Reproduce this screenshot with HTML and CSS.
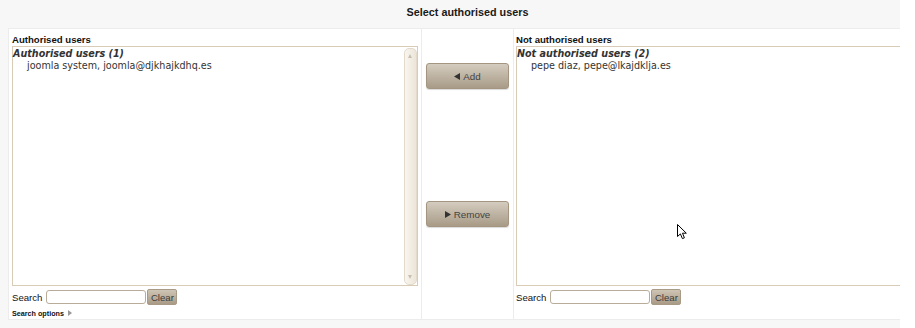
FILE: index.html
```html
<html lang="en">
    <head>
        <meta charset="UTF-8">
        <title>Select authorised users</title>
        <link rel="stylesheet" href="styles.css">
    </head>
    <body>
        <div class="wrap">
            <div class="title">Select authorised users</div>

            <div class="selector">
                <!--left side: users that already have access-->
                <div class="cell cell-left">
                    <div class="cell-label">Authorised users</div>
                    <div class="listbox">
                        <div class="list-items">
                            <div class="optgroup">Authorised users (1)</div>
                            <div class="option">joomla system, joomla@djkhajkdhq.es</div>
                        </div>
                        <div class="scrollbar">
                            <span class="arrow arrow-up"></span>
                            <span class="arrow arrow-down"></span>
                        </div>
                    </div>
                    <div class="search-row">
                        <label class="search-label">Search</label>
                        <input type="text" class="search-input">
                        <button class="btn-clear">Clear</button>
                    </div>
                    <div class="search-options">Search options <span class="toggle"></span></div>
                </div>

                <!--middle: move buttons-->
                <div class="cell cell-middle">
                    <button class="btn-move" id="add">
                        <svg width="6" height="7" viewBox="0 0 6 7"><polygon points="6,0 6,7 0,3.5" fill="#333"/></svg>
                        Add
                    </button>
                    <button class="btn-move btn-remove" id="remove">
                        <svg width="6" height="7" viewBox="0 0 6 7"><polygon points="0,0 0,7 6,3.5" fill="#333"/></svg>
                        Remove
                    </button>
                </div>

                <!--right side: users without access-->
                <div class="cell cell-right">
                    <div class="cell-label">Not authorised users</div>
                    <div class="listbox">
                        <div class="list-items">
                            <div class="optgroup">Not authorised users (2)</div>
                            <div class="option">pepe diaz, pepe@lkajdklja.es</div>
                        </div>
                    </div>
                    <div class="search-row">
                        <label class="search-label">Search</label>
                        <input type="text" class="search-input">
                        <button class="btn-clear">Clear</button>
                    </div>
                </div>
            </div>

            <!--mouse pointer from the screenshot-->
            <svg class="cursor" width="11" height="16" viewBox="0 0 11 16">
                <path d="M0.5 0.5 L0.5 12.5 L3.4 9.9 L5.4 14.6 L7.4 13.8 L5.5 9.2 L9.3 9.2 Z" fill="#fff" stroke="#000" stroke-width="1"/>
            </svg>
        </div>
    </body>
</html>
```

FILE: styles.css
```css
body {
    margin: 0;
    padding: 0;
    background-color: #fff;
    font-family: "Liberation Sans", Arial, sans-serif;
    color: #111;
}

.wrap {
    position: relative;
    width: 900px;
    height: 328px;
    overflow: hidden; /*right list is wider than the window*/
    background-color: #f7f7f7;
}

.title {
    box-sizing: border-box;
    height: 28px;
    padding-top: 5px;
    padding-left: 35px; /*page is centered on a wider area*/
    font-size: 10.8px;
    line-height: 14px;
    font-weight: bold;
    text-align: center;
    color: #1a1a1a;
}

.selector {
    display: grid;
    grid-template-columns: 413px 92px 413px;
    width: 920px;
    margin-left: 8px;
    background-color: #fff;
    border: 1px solid #ececec;
}

.cell {
    box-sizing: border-box;
    padding-top: 4px;
}

.cell-left {
    padding-left: 3px;
    border-right: 1px solid #ececec;
}

.cell-middle {
    display: flex;
    flex-direction: column;
    align-items: center;
    padding-top: 34px;
    border-right: 1px solid #ececec;
}

.cell-right {
    padding-left: 2px;
}

.cell-label {
    font-size: 9.6px;
    line-height: 13px;
    font-weight: bold;
    color: #111;
}

.listbox {
    box-sizing: border-box;
    display: flex;
    width: 406px;
    height: 240px;
    border: 1px solid #d9ccb6;
    background-color: #fff;
}

.list-items {
    flex-grow: 1;
    padding-top: 1px;
    font-family: "DejaVu Sans", sans-serif;
    font-size: 9.6px;
    line-height: 11.7px;
    color: #333;
}

.optgroup {
    font-weight: bold;
    font-style: italic;
    color: #333;
}

.option {
    padding-left: 14px;
}

.scrollbar {
    position: relative;
    width: 11px;
    margin: 1px 0 0 0;
    border: 1px solid #e3dacb;
    border-radius: 5px;
    background: linear-gradient(to right, #f9f6f0, #ece5d8);
}

.arrow {
    position: absolute;
    left: 3px;
    width: 0;
    height: 0;
    border-left: 2.5px solid transparent;
    border-right: 2.5px solid transparent;
}

.arrow-up {
    top: 5px;
    border-bottom: 4px solid #c9bfae;
}

.arrow-down {
    bottom: 5px;
    border-top: 4px solid #c9bfae;
}

.search-row {
    display: flex;
    align-items: center;
    height: 16px;
    margin-top: 3px;
}

.search-label {
    font-size: 9.6px;
    color: #111;
    margin-right: 4px;
}

.search-input {
    box-sizing: border-box;
    width: 100px;
    height: 14px;
    margin: 0;
    padding: 0 2px;
    border: 1px solid #b9ad9a;
    border-radius: 3px;
    background-color: #fff;
}

.btn-clear {
    box-sizing: border-box;
    width: 30px;
    height: 16px;
    margin-left: 1px;
    padding: 0;
    font-family: "Liberation Sans", Arial, sans-serif;
    font-size: 9.6px;
    color: #3c3c3c;
    border: 1px solid #a89a85;
    border-radius: 2px;
    background: linear-gradient(to bottom, #cfc5b5, #a99b86);
}

.search-options {
    margin-top: 4px;
    font-size: 7.2px;
    line-height: 10px;
    font-weight: bold;
    color: #111;
}

.toggle {
    display: inline-block;
    margin-left: 2px;
    width: 0;
    height: 0;
    border-top: 3px solid transparent;
    border-bottom: 3px solid transparent;
    border-left: 4px solid #999;
}

.btn-move {
    box-sizing: border-box;
    display: flex;
    align-items: center;
    justify-content: center;
    gap: 3px;
    width: 83px;
    height: 26px;
    padding: 0;
    font-family: "Liberation Sans", Arial, sans-serif;
    font-size: 9.8px;
    color: #444;
    border: 1px solid #a3957f;
    border-radius: 3px;
    background: linear-gradient(to bottom, #d4ccbf, #a89b87);
    box-shadow: 0 1px 1px rgba(0, 0, 0, 0.15);
}

.btn-remove {
    margin-top: 112px;
}

.cursor {
    position: absolute;
    left: 677px;
    top: 224px;
}
```
